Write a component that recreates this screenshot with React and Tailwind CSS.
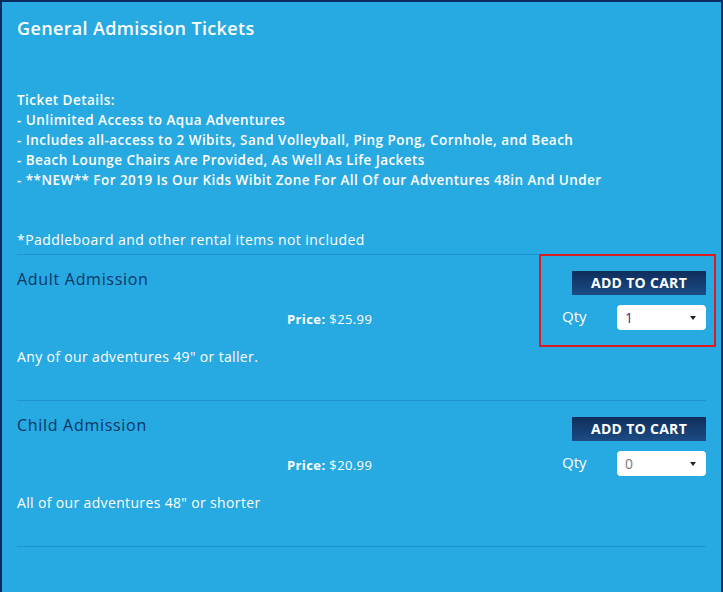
import React from 'react';

const products = [
  { name: 'Adult Admission', price: '$25.99', qty: '1', desc: 'Any of our adventures 49" or taller.', qtyColor: 'text-[#4b2a7a]' },
  { name: 'Child Admission', price: '$20.99', qty: '0', desc: 'All of our adventures 48" or shorter', qtyColor: 'text-[#777]' },
];

const details = [
  'Ticket Details:',
  '- Unlimited Access to Aqua Adventures',
  '- Includes all-access to 2 Wibits, Sand Volleyball, Ping Pong, Cornhole, and Beach',
  '- Beach Lounge Chairs Are Provided, As Well As Life Jackets',
  '- **NEW** For 2019 Is Our Kids Wibit Zone For All Of our Adventures 48in And Under',
];

const ProductRow = ({ p }) => (
  <div className="border-t border-[#1d95cb] flex pb-[33px]">
    <div className="flex-1 pt-[12px]">
      <div className="text-[16px] leading-[24px] tracking-[0.7px] text-[#0c3566]">{p.name}</div>
      <div className="mt-[18px] ml-[270px] text-[13px] leading-[20px] tracking-[0.4px] text-white">
        <span className="font-bold">Price:</span> {p.price}
      </div>
      <div className="mt-[18px] text-[14px] leading-[20px] tracking-[0.35px] text-white">{p.desc}</div>
    </div>
    <div className="w-[144px] pt-[16px] flex flex-col items-end">
      <button className="w-[134px] h-[24px] bg-gradient-to-b from-[#0f2e5c] to-[#1c4c84] text-white text-[14px] font-bold leading-[24px] tracking-[0.3px]">
        ADD TO CART
      </button>
      <div className="mt-[10px] w-full flex items-center justify-between">
        <span className="text-[15px] text-white pb-[2px]">Qty</span>
        <div className="w-[89px] h-[25px] bg-white rounded-[4px] flex items-center justify-between pl-[8px] pr-[10px]">
          <span className={`text-[14px] ${p.qtyColor}`}>{p.qty}</span>
          <svg width="6" height="4" viewBox="0 0 6 4"><path d="M0 0h6L3 4z" fill="#222" /></svg>
        </div>
      </div>
    </div>
  </div>
);

export default function App() {
  return (
    <div className="w-[723px] h-[592px] bg-[#0b2b5e] pt-[2px] pl-[2px] pr-[2px] overflow-hidden relative" style={{ fontFamily: '"Open Sans", "DejaVu Sans", sans-serif' }}>
      <div className="h-full bg-[#27a9e1] px-[15px] pt-[13px]">
        <h1 className="text-[18px] leading-[26px] font-semibold tracking-[0.35px] text-white">General Admission Tickets</h1>
        <div className="mt-[49px] text-[13.5px] leading-[20px] font-semibold tracking-[0.45px] text-white">
          {details.map((d) => (
            <div key={d}>{d}</div>
          ))}
        </div>
        <div className="mt-[40px] mb-[4px] text-[14px] leading-[20px] tracking-[0.45px] text-white">
          *Paddleboard and other rental items not included
        </div>
        {products.map((p) => (
          <ProductRow key={p.name} p={p} />
        ))}
        <div className="border-t border-[#1d95cb]" />
      </div>
      <div className="absolute left-[539px] top-[254px] w-[177px] h-[93px] border-2 border-[#dc1a22]" />
    </div>
  );
}
